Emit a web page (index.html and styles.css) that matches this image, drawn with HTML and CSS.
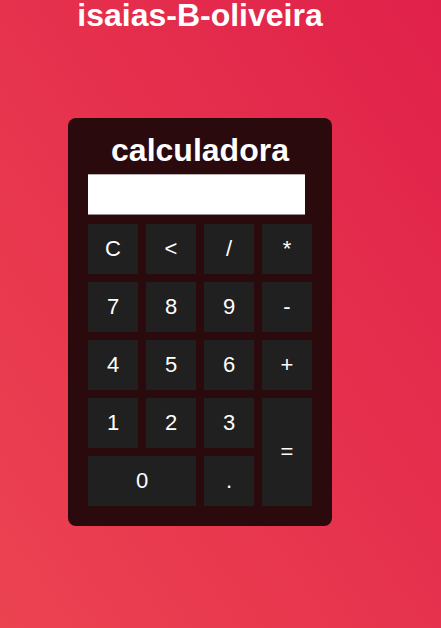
FILE: index.html
```html
<!DOCTYPE html>
<html lang="pt">
<head>
<meta charset="utf-8">
<title>calculadora</title>
<link rel="stylesheet" href="styles.css">
</head>
<body>
<div class="page">
  <h1 class="author">isaias-B-oliveira</h1>
  <div class="calc">
    <h2 class="calc-title">calculadora</h2>
    <div class="display"></div>
    <div class="keys">
      <button class="key">C</button>
      <button class="key">&lt;</button>
      <button class="key">/</button>
      <button class="key">*</button>
      <button class="key">7</button>
      <button class="key">8</button>
      <button class="key">9</button>
      <button class="key">-</button>
      <button class="key">4</button>
      <button class="key">5</button>
      <button class="key">6</button>
      <button class="key">+</button>
      <button class="key">1</button>
      <button class="key">2</button>
      <button class="key">3</button>
      <button class="key key-eq">=</button>
      <button class="key key-zero">0</button>
      <button class="key">.</button>
    </div>
  </div>
</div>
</body>
</html>
```

FILE: styles.css
```css
html, body {
  margin: 0;
  padding: 0;
  height: 100%;
}

body {
  background: linear-gradient(to top right, #ec4351, #e0214a);
  font-family: "Liberation Sans", Arial, sans-serif;
  color: #fff;
}

.page {
  width: 400px;
  display: flex;
  flex-direction: column;
  align-items: center;
}

.author {
  margin: 0;
  font-size: 32px;
  line-height: 30px;
  font-weight: bold;
  color: #fff;
}

.calc {
  margin-top: 88px;
  width: 264px;
  box-sizing: border-box;
  padding: 14px 20px 20px;
  background: #2b0a0e;
  border-radius: 8px;
}

.calc-title {
  margin: 0;
  font-size: 32px;
  line-height: 37px;
  font-weight: bold;
  text-align: center;
  color: #fff;
}

.display {
  margin-top: 5px;
  width: 217px;
  height: 41px;
  box-sizing: border-box;
  background: #fff;
  border-top: 1px solid #b9b0b1;
  border-bottom: 1px solid #9c8b8d;
}

.keys {
  margin-top: 9px;
  display: grid;
  grid-template-columns: repeat(4, 50px);
  grid-auto-rows: 50px;
  gap: 8px;
}

.key {
  margin: 0;
  padding: 0;
  border: none;
  background: #202020;
  color: #fff;
  font-family: "Liberation Sans", Arial, sans-serif;
  font-size: 22px;
}

.key-eq {
  grid-column: 4;
  grid-row: 4 / span 2;
}

.key-zero {
  grid-column: 1 / span 2;
}
```
